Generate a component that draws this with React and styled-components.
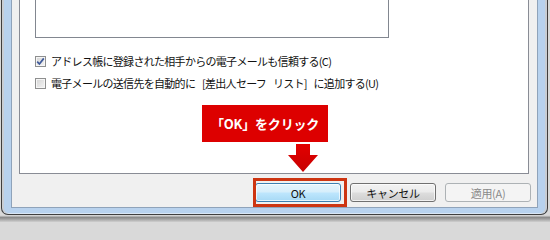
import React from "react";
import styled, { createGlobalStyle } from "styled-components";

const Global = createGlobalStyle`
  html, body { margin: 0; padding: 0; }
  body { background: #d9d9d9; font-family: "Noto Sans CJK JP", "Noto Sans", sans-serif; }
`;

const Page = styled.div`
  position: relative;
  width: 550px;
  height: 222px;
  overflow: hidden;
  background: linear-gradient(#d9d9d9, #d9d9d9 97%, #8a8a8a 98%, #cfcfcf);
`;

const Window = styled.div`
  box-sizing: border-box;
  margin-left: 1px;
  width: 547px;
  height: 215px;
  border: 1px solid #3f3f3f;
  border-top: none;
  border-radius: 0 0 7px 7px;
  background: #b8d2ee;
  box-shadow: inset 2px 0 0 #c9ced4, inset -2px 0 0 #c9ced4, inset 0 -1px 0 #d9e6f4;
  padding: 0 9px 6px 9px;
`;

const Client = styled.div`
  box-sizing: border-box;
  height: 208px;
  background: #f0f0f0;
  border: 1px solid #8fa3ba;
  border-top: none;
  padding: 0 8px 0 7px;
  display: flex;
  flex-direction: column;
`;

const TabPage = styled.div`
  box-sizing: border-box;
  background: #ffffff;
  border: 1px solid #898c95;
  border-top: none;
  height: 174px;
  padding-left: 15px;
  display: flex;
  flex-direction: column;
`;

const ListBox = styled.div`
  box-sizing: border-box;
  width: 354px;
  height: 38px;
  border: 1px solid #828790;
  border-top: none;
  margin-bottom: 12px;
`;

const Row = styled.label`
  display: flex;
  align-items: center;
  height: 22px;
  gap: 5px;
  font-size: 11px;
  letter-spacing: -0.7px;
  word-spacing: 5px;
  color: #111111;
  white-space: pre;
`;

const Box = styled.span`
  box-sizing: border-box;
  width: 11px;
  height: 11px;
  flex: none;
  border: 1px solid #8e8f8f;
  background: linear-gradient(135deg, #d4d4d4, #f4f4f4);
  box-shadow: inset 0 0 0 1px #f6f6f6;
  display: flex;
  align-items: center;
  justify-content: center;
`;

const ButtonRow = styled.div`
  display: flex;
  justify-content: flex-end;
  gap: 9px;
  margin-top: 9px;
  margin-right: -2px;
`;

const Button = styled.div`
  position: relative;
  box-sizing: border-box;
  width: 86px;
  height: 19px;
  border-radius: 3px;
  display: flex;
  align-items: center;
  justify-content: center;
  font-size: 11px;
  letter-spacing: -0.3px;
  font-family: "Noto Sans CJK JP", "Noto Sans", sans-serif;
  color: ${(p) => (p.$disabled ? "#8a8a8a" : "#111")};
  border: 1px solid ${(p) => (p.$primary ? "#3c7fb1" : p.$disabled ? "#adb2b5" : "#707070")};
  background: ${(p) =>
    p.$primary
      ? "linear-gradient(#e6f4fc 0%, #d6eefb 48%, #bee6fd 52%, #a7d9f5 100%)"
      : p.$disabled
      ? "#f4f4f4"
      : "linear-gradient(#f2f2f2 0%, #ebebeb 48%, #dddddd 52%, #cfcfcf 100%)"};
  box-shadow: inset 0 0 0 1px ${(p) => (p.$disabled ? "#f4f4f4" : "rgba(255,255,255,0.7)")};
`;

const Highlight = styled.div`
  position: absolute;
  left: -3px;
  top: -6px;
  width: 94px;
  height: 29px;
  box-sizing: border-box;
  border: 3px solid #cd3512;
  pointer-events: none;
`;

const Callout = styled.div`
  position: absolute;
  left: 202px;
  top: 105px;
  width: 126px;
  height: 37px;
  background: #dd0000;
  color: #ffffff;
  display: flex;
  align-items: center;
  justify-content: center;
  font-family: "Noto Sans CJK JP", sans-serif;
  font-weight: 700;
  font-size: 13px;
  letter-spacing: -0.2px;
`;

const Arrow = styled.svg`
  position: absolute;
  left: 288px;
  top: 144px;
`;

function Check({ checked }) {
  return (
    <Box>
      {checked && (
        <svg width="9" height="9" viewBox="0 0 9 9">
          <path d="M1.2 4.6 L3.4 7 L7.8 1.4" fill="none" stroke="#3f5a9a" strokeWidth="1.7" />
        </svg>
      )}
    </Box>
  );
}

export default function App() {
  return (
    <>
      <Global />
      <Page>
        <Window>
          <Client>
            <TabPage>
              <ListBox />
              <Row>
                <Check checked />
                アドレス帳に登録された相手からの電子メールも信頼する(C)
              </Row>
              <Row>
                <Check />
                電子メールの送信先を自動的に [差出人セーフ リスト] に追加する(U)
              </Row>
            </TabPage>
            <ButtonRow>
              <Button $primary>
                OK
                <Highlight />
              </Button>
              <Button>キャンセル</Button>
              <Button $disabled>適用(A)</Button>
            </ButtonRow>
          </Client>
        </Window>
        <Callout>「OK」をクリック</Callout>
        <Arrow width="30" height="28" viewBox="0 0 30 28">
          <defs>
            <linearGradient id="ag" x1="0" y1="0" x2="0" y2="1">
              <stop offset="0" stopColor="#e20000" />
              <stop offset="1" stopColor="#c80000" />
            </linearGradient>
          </defs>
          <path d="M8 0 H22 V11 H30 L15 28 L0 11 H8 Z" fill="url(#ag)" />
        </Arrow>
      </Page>
    </>
  );
}
